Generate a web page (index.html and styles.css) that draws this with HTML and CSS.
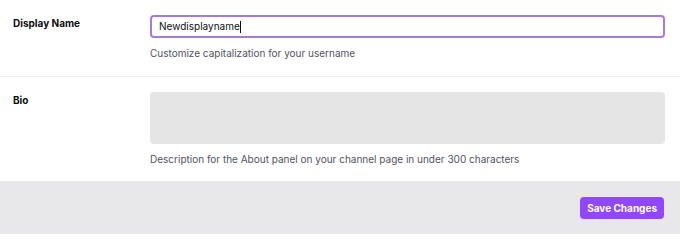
FILE: index.html
```html
<!DOCTYPE html>
<html>
<head>
<meta charset="utf-8">
<link rel="stylesheet" href="styles.css">
</head>
<body>
<div class="panel">
  <div class="row row-first">
    <div class="label">Display Name</div>
    <div class="field">
      <div class="input"><span class="value">Newdisplayname</span><span class="caret"></span></div>
      <div class="help">Customize capitalization for your username</div>
    </div>
  </div>
  <div class="row row-second">
    <div class="label">Bio</div>
    <div class="field">
      <div class="textarea"></div>
      <div class="help">Description for the About panel on your channel page in under 300 characters</div>
    </div>
  </div>
  <div class="footer">
    <button class="save">Save Changes</button>
  </div>
</div>
</body>
</html>
```
FILE: styles.css
```css
html, body {
  margin: 0;
  padding: 0;
  background: #ffffff;
}
body {
  font-family: Inter, "Noto Sans", sans-serif;
  font-size: 10px;
  line-height: 15px;
  color: #0e0e10;
  width: 680px;
  height: 234px;
  overflow: hidden;
}
.row {
  display: flex;
  padding: 15px 15px 15px 13px;
}
.row-first {
  border-bottom: 1px solid #efeff1;
  padding-bottom: 15px;
}
.row-second {
  padding-bottom: 14px;
}
.label {
  width: 137px;
  flex: none;
  font-weight: 700;
  padding-top: 1px;
}
.field {
  flex: 1;
  display: flex;
  flex-direction: column;
}
.input {
  box-sizing: border-box;
  height: 23px;
  border: 2px solid #a47bd8;
  border-radius: 4px;
  padding: 0 7px;
  display: flex;
  align-items: center;
  color: #0e0e10;
}
.caret {
  display: inline-block;
  width: 1px;
  height: 12px;
  background: #0e0e10;
}
.textarea {
  height: 52px;
  background: #e5e5e6;
  border-radius: 4px;
}
.help {
  color: #53535f;
  margin-top: 8px;
}
.footer {
  background: #e8e8eb;
  height: 53px;
  display: flex;
  justify-content: flex-end;
  align-items: flex-start;
  padding: 16px 16px 0 0;
  box-sizing: border-box;
}
.save {
  font-family: Inter, "Noto Sans", sans-serif;
  font-size: 10px;
  font-weight: 700;
  color: #ffffff;
  background: #9147ff;
  border: none;
  border-radius: 4px;
  height: 22px;
  padding: 0 7px;
  line-height: 22px;
}
```
